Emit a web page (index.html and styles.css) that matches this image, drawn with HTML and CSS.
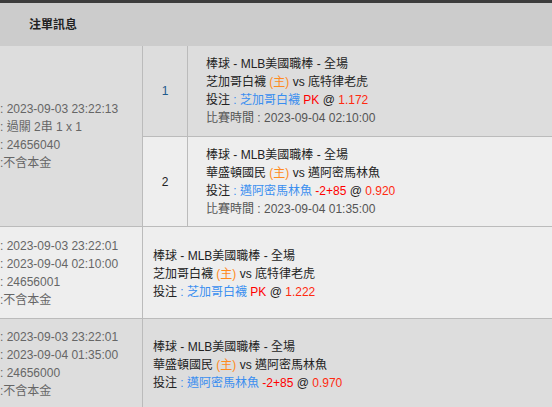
FILE: index.html
```html
<!DOCTYPE html>
<html lang="zh-Hant">
<head>
<meta charset="utf-8">
<title>注單訊息</title>
<link rel="stylesheet" href="styles.css">
</head>
<body>
<div class="topbar"></div>
<div class="header"><span class="title">注單訊息</span></div>

<div class="row dark">
  <div class="info">
    <div>: 2023-09-03 23:22:13</div>
    <div>: 過關 2串 1 x 1</div>
    <div>: 24656040</div>
    <div>:不含本金</div>
  </div>
  <div class="legs">
    <div class="leg dark h90">
      <div class="num">1</div>
      <div class="detail">
        <div>棒球 - MLB美國職棒 - 全場</div>
        <div>芝加哥白襪 <span class="home">(主)</span> vs 底特律老虎</div>
        <div>投注 <span class="team">: 芝加哥白襪</span> <span class="hc">PK</span> @ <span class="odds">1.172</span></div>
        <div class="time">比賽時間 : 2023-09-04 02:10:00</div>
      </div>
    </div>
    <div class="leg light h89">
      <div class="num">2</div>
      <div class="detail">
        <div>棒球 - MLB美國職棒 - 全場</div>
        <div>華盛頓國民 <span class="home">(主)</span> vs 邁阿密馬林魚</div>
        <div>投注 <span class="team">: 邁阿密馬林魚</span> <span class="hc">-2+85</span> @ <span class="odds">0.920</span></div>
        <div class="time">比賽時間 : 2023-09-04 01:35:00</div>
      </div>
    </div>
  </div>
</div>

<div class="row light h91">
  <div class="info">
    <div>: 2023-09-03 23:22:01</div>
    <div>: 2023-09-04 02:10:00</div>
    <div>: 24656001</div>
    <div>:不含本金</div>
  </div>
  <div class="single">
    <div>棒球 - MLB美國職棒 - 全場</div>
    <div>芝加哥白襪 <span class="home">(主)</span> vs 底特律老虎</div>
    <div>投注 <span class="team">: 芝加哥白襪</span> <span class="hc">PK</span> @ <span class="odds">1.222</span></div>
  </div>
</div>

<div class="row dark h90">
  <div class="info">
    <div>: 2023-09-03 23:22:01</div>
    <div>: 2023-09-04 01:35:00</div>
    <div>: 24656000</div>
    <div>:不含本金</div>
  </div>
  <div class="single">
    <div>棒球 - MLB美國職棒 - 全場</div>
    <div>華盛頓國民 <span class="home">(主)</span> vs 邁阿密馬林魚</div>
    <div>投注 <span class="team">: 邁阿密馬林魚</span> <span class="hc">-2+85</span> @ <span class="odds">0.970</span></div>
  </div>
</div>
</body>
</html>
```
FILE: styles.css
```css
html, body {
  margin: 0;
  padding: 0;
}
body {
  width: 552px;
  overflow: hidden;
  background: #dddddd;
  font-family: "Liberation Sans", Arial, "Noto Sans CJK TC", sans-serif;
  font-size: 12px;
  line-height: 18px;
  color: #222222;
}
.topbar {
  height: 3px;
  background: #3c3c3c;
}
.header {
  height: 43px;
  background: #cccccc;
  display: flex;
  align-items: center;
  padding-left: 29px;
}
.title {
  font-weight: bold;
  color: #222222;
}
.row {
  display: flex;
  border-bottom: 1px solid #bbbbbb;
  white-space: nowrap;
}
.dark { background: #dddddd; }
.light { background: #eeeeee; }
.h89 { height: 89px; }
.h90 { height: 90px; }
.h91 { height: 91px; }
.info {
  width: 142px;
  flex: none;
  border-right: 1px solid #bbbbbb;
  display: flex;
  flex-direction: column;
  justify-content: center;
  color: #666666;
  overflow: hidden;
}
.legs {
  flex: 1;
  display: flex;
  flex-direction: column;
}
.leg {
  display: flex;
}
.leg + .leg {
  border-top: 1px solid #bbbbbb;
}
.num {
  width: 44px;
  flex: none;
  border-right: 1px solid #bbbbbb;
  display: flex;
  align-items: center;
  justify-content: center;
}
.leg.dark .num { color: #1e5a8c; }
.detail {
  padding-left: 18px;
  display: flex;
  flex-direction: column;
  justify-content: center;
}
.single {
  padding-left: 10px;
  display: flex;
  flex-direction: column;
  justify-content: center;
  padding-top: 2px;
}
.home { color: #ff8a1e; }
.team { color: #3a8ef0; }
.hc { color: #ff0000; }
.odds { color: #ff2a10; }
.time { color: #555555; }
```
